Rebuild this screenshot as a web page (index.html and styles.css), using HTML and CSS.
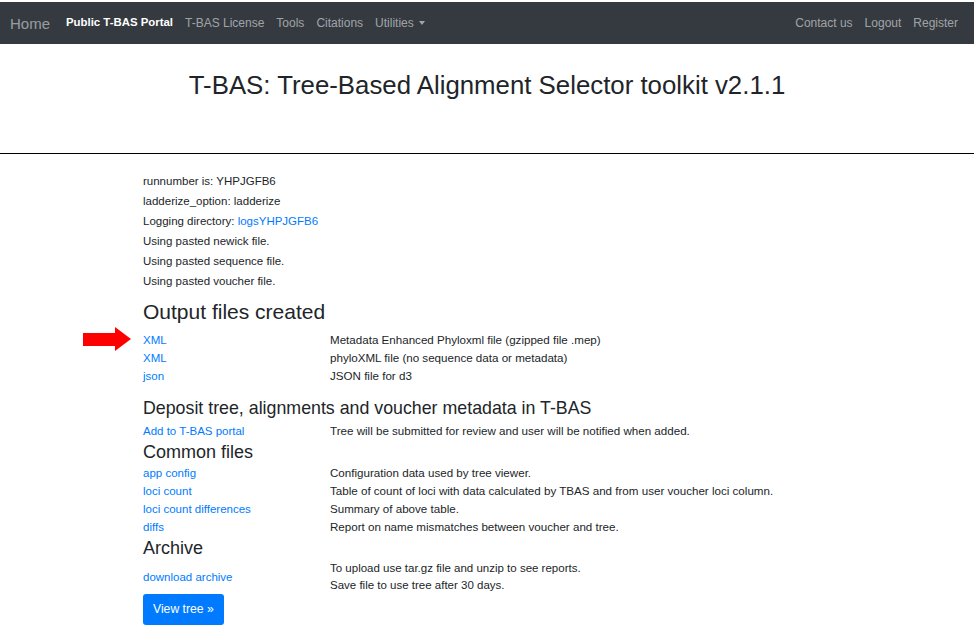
FILE: index.html
```html
<!DOCTYPE html>
<html lang="en">
<head>
<meta charset="utf-8">
<title>T-BAS</title>
<link rel="stylesheet" href="styles.css">
</head>
<body>
<nav class="navbar">
  <a class="brand" href="#">Home</a>
  <ul class="nav-left">
    <li><a class="active" href="#">Public T-BAS Portal</a></li>
    <li><a href="#">T-BAS License</a></li>
    <li><a href="#">Tools</a></li>
    <li><a href="#">Citations</a></li>
    <li><a class="dropdown" href="#">Utilities</a></li>
  </ul>
  <ul class="nav-right">
    <li><a href="#">Contact us</a></li>
    <li><a href="#">Logout</a></li>
    <li><a href="#">Register</a></li>
  </ul>
</nav>

<header class="jumbo">
  <h1>T-BAS: Tree-Based Alignment Selector toolkit v2.1.1</h1>
</header>
<hr class="rule">

<main class="content">
  <div class="info">
    <div>runnumber is: YHPJGFB6</div>
    <div>ladderize_option: ladderize</div>
    <div>Logging directory: <a href="#">logsYHPJGFB6</a></div>
    <div>Using pasted newick file.</div>
    <div>Using pasted sequence file.</div>
    <div>Using pasted voucher file.</div>
  </div>

  <h2 class="h-out">Output files created</h2>
  <div class="files">
    <div class="row"><span class="arrow"></span><a href="#">XML</a><span>Metadata Enhanced Phyloxml file (gzipped file .mep)</span></div>
    <div class="row"><a href="#">XML</a><span>phyloXML file (no sequence data or metadata)</span></div>
    <div class="row"><a href="#">json</a><span>JSON file for d3</span></div>
  </div>

  <h3 class="h-dep">Deposit tree, alignments and voucher metadata in T-BAS</h3>
  <div class="files">
    <div class="row"><a href="#">Add to T-BAS portal</a><span>Tree will be submitted for review and user will be notified when added.</span></div>
  </div>

  <h3 class="h-sec">Common files</h3>
  <div class="files">
    <div class="row"><a href="#">app config</a><span>Configuration data used by tree viewer.</span></div>
    <div class="row"><a href="#">loci count</a><span>Table of count of loci with data calculated by TBAS and from user voucher loci column.</span></div>
    <div class="row"><a href="#">loci count differences</a><span>Summary of above table.</span></div>
    <div class="row"><a href="#">diffs</a><span>Report on name mismatches between voucher and tree.</span></div>
  </div>

  <h3 class="h-sec">Archive</h3>
  <div class="archive">
    <a class="dl" href="#">download archive</a>
    <div class="archive-desc">
      <div>To upload use tar.gz file and unzip to see reports.</div>
      <div>Save file to use tree after 30 days.</div>
    </div>
  </div>
  <a class="btn" href="#">View tree &raquo;</a>
</main>
</body>
</html>
```
FILE: styles.css
```css
* { box-sizing: border-box; }
html, body { margin: 0; padding: 0; background: #fff; }
body {
  font-family: "Liberation Sans", Arial, sans-serif;
  color: #212529;
  font-size: 11.5px;
}
a { color: #007bff; text-decoration: none; }

.navbar {
  margin-top: 2px;
  height: 42px;
  background: #343a40;
  display: flex;
  align-items: center;
  padding: 0 16px 0 10px;
}
.brand {
  color: rgba(255,255,255,.5);
  font-size: 15px;
  margin-right: 16px;
}
.navbar ul { list-style: none; margin: 0; padding: 0; display: flex; gap: 12px; }
.navbar .nav-right { margin-left: auto; }
.navbar ul a { color: rgba(255,255,255,.55); font-size: 12px; }
.navbar ul a.active { color: #fff; font-weight: bold; font-size: 11.4px; }
.dropdown::after {
  content: "";
  display: inline-block;
  margin-left: 5px;
  vertical-align: 2px;
  border-top: 4px solid rgba(255,255,255,.55);
  border-left: 3.5px solid transparent;
  border-right: 3.5px solid transparent;
}

.jumbo { height: 109px; padding-top: 26px; }
.jumbo h1 {
  margin: 0;
  text-align: center;
  font-weight: normal;
  font-size: 25.8px;
  line-height: 30px;
  color: #212529;
}
.rule { margin: 0; border: 0; border-top: 1px solid #000; }

.content { padding: 17px 0 0 143px; }
.info div { line-height: 20px; }

h2, h3 { margin: 0; font-weight: normal; color: #212529; }
.h-out { font-size: 21px; line-height: 26px; margin-top: 8px; margin-bottom: 6px; }
.h-dep { font-size: 17.8px; line-height: 22px; margin-top: 12px; margin-bottom: 3px; }
.h-sec { font-size: 18px; line-height: 22px; margin-top: 1px; margin-bottom: 1px; }

.files .row { display: grid; grid-template-columns: 187px 1fr; line-height: 18px; position: relative; }
.files .row span:last-child { font-size: 11.6px; }
.arrow {
  position: absolute;
  left: -60px;
  top: -4px;
  width: 48px;
  height: 25px;
}
.arrow::before {
  content: "";
  position: absolute;
  left: 0; top: 6px;
  width: 32px; height: 13px;
  background: #f00;
}
.arrow::after {
  content: "";
  position: absolute;
  left: 32px; top: 0;
  border-left: 16px solid #f00;
  border-top: 12.5px solid transparent;
  border-bottom: 12.5px solid transparent;
}

.archive { display: grid; grid-template-columns: 187px 1fr; align-items: center; margin-top: 0; }
.archive-desc div { line-height: 17px; }
.btn {
  display: inline-block;
  margin-top: 0;
  background: #007bff;
  color: #fff;
  font-size: 12.2px;
  padding: 0 10px;
  line-height: 31px;
  border-radius: 3px;
}
```
